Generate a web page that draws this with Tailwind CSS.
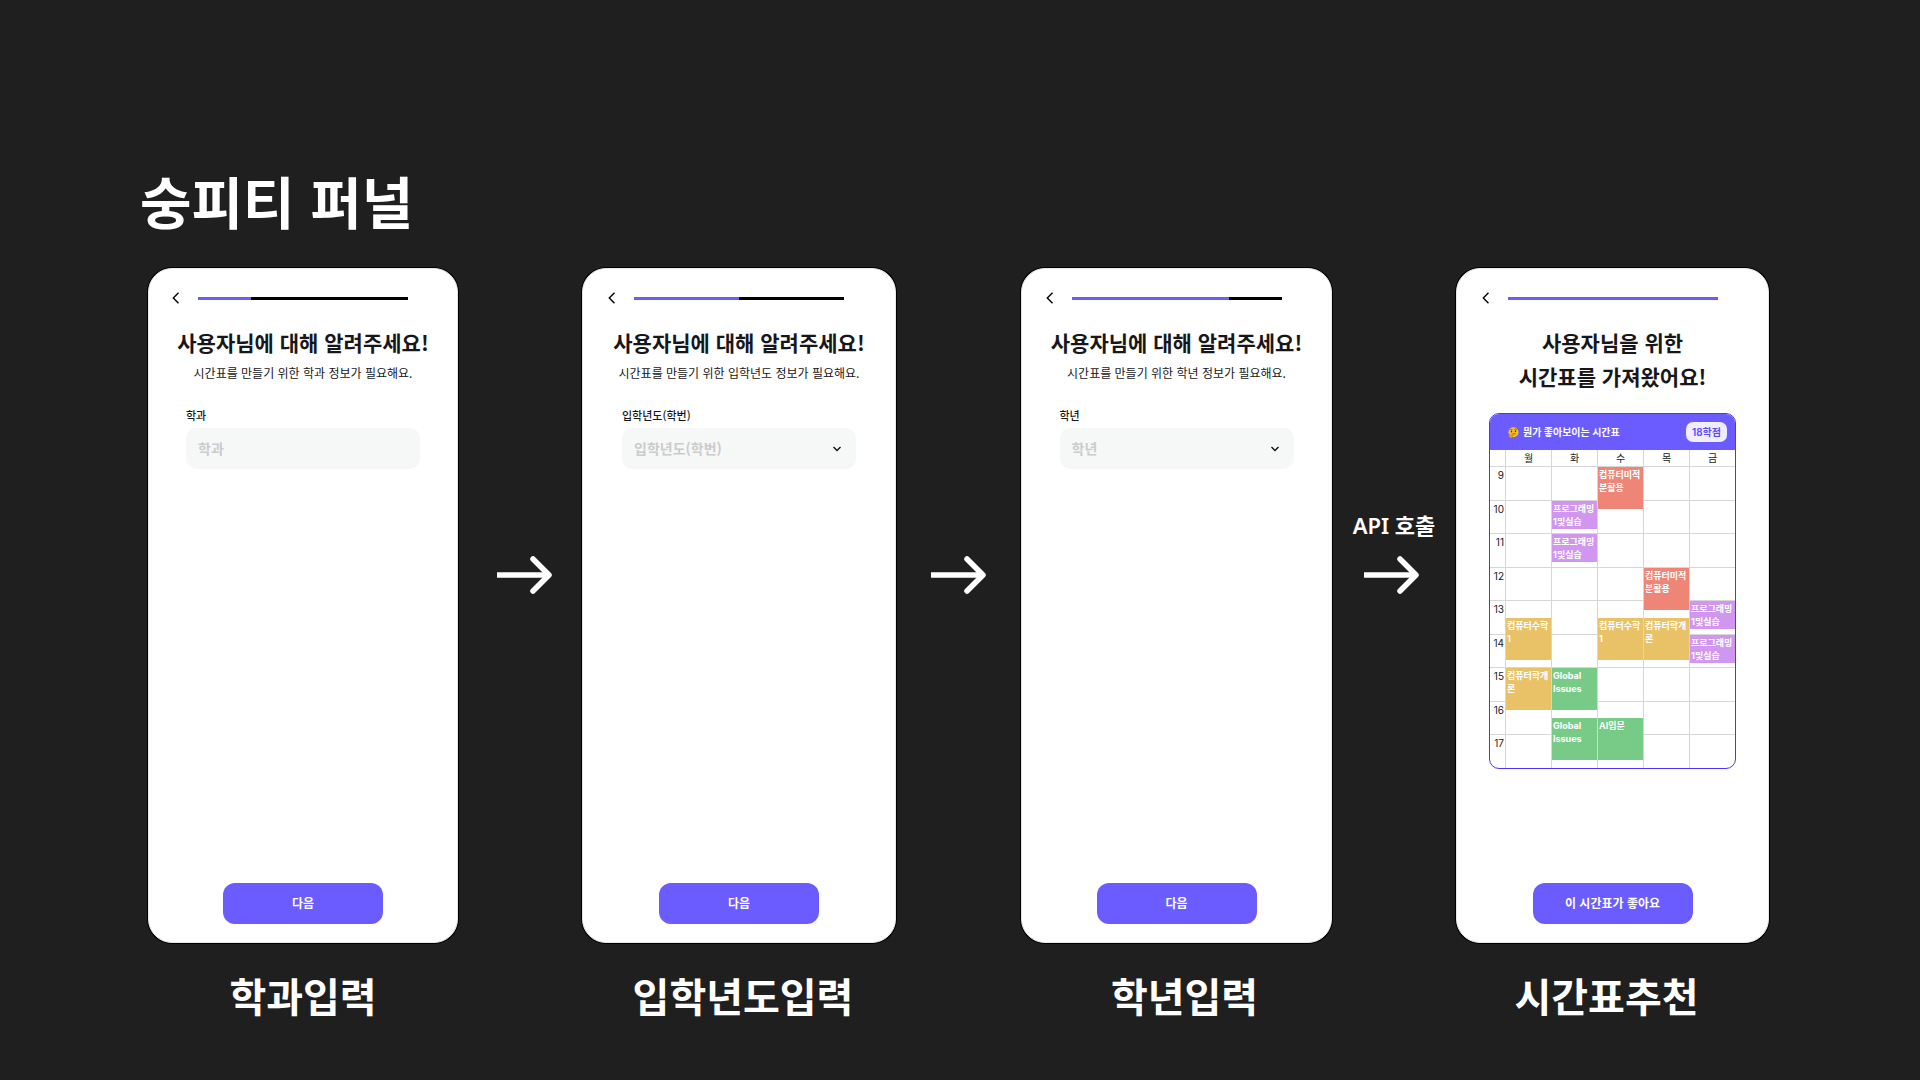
<!DOCTYPE html>
<html lang="ko">
<head>
  <meta charset="UTF-8">
  <meta name="viewport" content="width=device-width, initial-scale=1.0">
  <title>숭피티 퍼널</title>
  <script src="https://cdn.jsdelivr.net/npm/@tailwindcss/browser@4"></script>
</head>
<body class="min-h-screen bg-[#1f1f1f] font-['Noto_Sans_CJK_KR',sans-serif] text-[#17171b]">
  <main class="pt-40 pr-[151px] pl-[140px]">
    <h1 class="text-[56px] leading-[80px] font-bold text-white">숭피티 퍼널</h1>

    <div class="mt-7 ml-2 grid grid-cols-[310fr_124fr_314fr_125fr_311fr_124fr_313fr] items-start">

      <!-- Step 1: department -->
      <section>
        <div class="flex h-[675px] flex-col items-center rounded-3xl border border-[#e5e7eb] bg-white pt-[17px] pb-[18px] ring-1 ring-black">
          <div class="flex h-6 w-[264px] items-center">
            <button type="button" aria-label="뒤로" class="w-[27px]">
              <svg class="h-3 w-3" viewBox="0 0 12 12" fill="none" stroke="#000" stroke-width="1.4"><path d="M7.5 .8 2.300 6l5.200 5.200"/></svg>
            </button>
            <div class="h-[3px] w-[210px] bg-black"><div class="h-full bg-[#6b5cff]" style="width:25%"></div></div>
          </div>
          <h2 class="mt-[15px] text-[21px] leading-[34px] font-bold">사용자님에 대해 알려주세요!</h2>
          <p class="mt-1 text-xs leading-5">시간표를 만들기 위한 학과 정보가 필요해요.</p>
          <div class="mt-6 w-[234px]">
            <label for="department" class="block text-[11px] leading-4 font-medium">학과</label>
            <input id="department" type="text" placeholder="학과" class="mt-[5px] h-[41px] w-full rounded-[10px] bg-[#f6f8f8] px-3 pb-px text-sm font-bold placeholder:text-[#cbcbcb]">
          </div>
          <button type="button" class="mt-auto h-[41px] w-40 rounded-xl bg-[#6b5cff] pb-[2px] text-xs font-bold text-white">다음</button>
        </div>
        <h3 class="mt-[22px] text-center text-[40px] leading-[60px] font-bold text-white">학과입력</h3>
      </section>

      <div class="flex h-[327px] flex-col justify-end">
        <svg class="ml-[39px] h-10 w-14" viewBox="0 0 56 40" fill="none" stroke="#fff" stroke-width="5.500"><path d="M0 20h51"/><path d="M36 4l16 16-16 16" stroke-linecap="round" stroke-linejoin="round"/></svg>
      </div>

      <!-- Step 2: admission year -->
      <section>
        <div class="flex h-[675px] flex-col items-center rounded-3xl border border-[#e5e7eb] bg-white pt-[17px] pb-[18px] ring-1 ring-black">
          <div class="flex h-6 w-[264px] items-center">
            <button type="button" aria-label="뒤로" class="w-[27px]">
              <svg class="h-3 w-3" viewBox="0 0 12 12" fill="none" stroke="#000" stroke-width="1.4"><path d="M7.5 .8 2.300 6l5.200 5.200"/></svg>
            </button>
            <div class="h-[3px] w-[210px] bg-black"><div class="h-full bg-[#6b5cff]" style="width:50%"></div></div>
          </div>
          <h2 class="mt-[15px] text-[21px] leading-[34px] font-bold">사용자님에 대해 알려주세요!</h2>
          <p class="mt-1 text-xs leading-5">시간표를 만들기 위한 입학년도 정보가 필요해요.</p>
          <div class="mt-6 w-[234px]">
            <label for="admission" class="block text-[11px] leading-4 font-medium">입학년도(학번)</label>
            <div class="relative mt-[5px]">
              <select id="admission" class="h-[41px] w-full appearance-none rounded-[10px] bg-[#f6f8f8] px-3 pb-[2px] text-sm font-bold text-[#cbcbcb]">
                <option>입학년도(학번)</option>
              </select>
              <svg class="pointer-events-none absolute top-4 right-[14px] h-[10px] w-[10px]" viewBox="0 0 10 10" fill="none" stroke="#111" stroke-width="1.4"><path d="M1.5 3 5 6.500 8.500 3"/></svg>
            </div>
          </div>
          <button type="button" class="mt-auto h-[41px] w-40 rounded-xl bg-[#6b5cff] pb-[2px] text-xs font-bold text-white">다음</button>
        </div>
        <h3 class="mt-[22px] pl-2 text-center text-[40px] leading-[60px] font-bold text-white">입학년도입력</h3>
      </section>

      <div class="flex h-[327px] flex-col justify-end">
        <svg class="ml-[35px] h-10 w-14" viewBox="0 0 56 40" fill="none" stroke="#fff" stroke-width="5.500"><path d="M0 20h51"/><path d="M36 4l16 16-16 16" stroke-linecap="round" stroke-linejoin="round"/></svg>
      </div>

      <!-- Step 3: grade -->
      <section>
        <div class="flex h-[675px] flex-col items-center rounded-3xl border border-[#e5e7eb] bg-white pt-[17px] pb-[18px] ring-1 ring-black">
          <div class="flex h-6 w-[264px] items-center">
            <button type="button" aria-label="뒤로" class="w-[27px]">
              <svg class="h-3 w-3" viewBox="0 0 12 12" fill="none" stroke="#000" stroke-width="1.4"><path d="M7.5 .8 2.300 6l5.200 5.200"/></svg>
            </button>
            <div class="h-[3px] w-[210px] bg-black"><div class="h-full bg-[#6b5cff]" style="width:75%"></div></div>
          </div>
          <h2 class="mt-[15px] text-[21px] leading-[34px] font-bold">사용자님에 대해 알려주세요!</h2>
          <p class="mt-1 text-xs leading-5">시간표를 만들기 위한 학년 정보가 필요해요.</p>
          <div class="mt-6 w-[234px]">
            <label for="grade" class="block text-[11px] leading-4 font-medium">학년</label>
            <div class="relative mt-[5px]">
              <select id="grade" class="h-[41px] w-full appearance-none rounded-[10px] bg-[#f6f8f8] px-3 pb-[2px] text-sm font-bold text-[#cbcbcb]">
                <option>학년</option>
              </select>
              <svg class="pointer-events-none absolute top-4 right-[14px] h-[10px] w-[10px]" viewBox="0 0 10 10" fill="none" stroke="#111" stroke-width="1.4"><path d="M1.500 3 5 6.500 8.500 3"/></svg>
            </div>
          </div>
          <button type="button" class="mt-auto h-[41px] w-40 rounded-xl bg-[#6b5cff] pb-[2px] text-xs font-bold text-white">다음</button>
        </div>
        <h3 class="mt-[22px] pl-4 text-center text-[40px] leading-[60px] font-bold text-white">학년입력</h3>
      </section>

      <div class="flex h-[327px] flex-col justify-end gap-[14px]">
        <p class="text-center font-['Noto_Sans','Noto_Sans_CJK_KR',sans-serif] text-[22px] leading-8 font-semibold text-white">API 호출</p>
        <svg class="ml-8 h-10 w-14" viewBox="0 0 56 40" fill="none" stroke="#fff" stroke-width="5.500"><path d="M0 20h51"/><path d="M36 4l16 16-16 16" stroke-linecap="round" stroke-linejoin="round"/></svg>
      </div>

      <!-- Step 4: recommended timetable -->
      <section>
        <div class="flex h-[675px] flex-col items-center rounded-3xl border border-[#e5e7eb] bg-white pt-[17px] pb-[18px] ring-1 ring-black">
          <div class="flex h-6 w-[264px] items-center">
            <button type="button" aria-label="뒤로" class="w-[27px]">
              <svg class="h-3 w-3" viewBox="0 0 12 12" fill="none" stroke="#000" stroke-width="1.4"><path d="M7.5 .8 2.300 6l5.200 5.200"/></svg>
            </button>
            <div class="h-[3px] w-[210px] bg-black"><div class="h-full bg-[#6b5cff]" style="width:100%"></div></div>
          </div>
          <h2 class="mt-[15px] text-center text-[21px] leading-[34px] font-bold">사용자님을 위한<br>시간표를 가져왔어요!</h2>

          <div class="mt-5 w-[247px] overflow-hidden rounded-[10px] border border-[#4a35ff] font-['Inter','Noto_Sans_CJK_KR',sans-serif]">
            <div class="flex h-9 items-center bg-[#6b5cff] pr-2 pl-[18px] text-white">
              <svg class="h-[11px] w-[11px]" viewBox="0 0 22 22" fill="none">
                <circle cx="11" cy="10.500" r="10" fill="#fcc21b"/>
                <path d="M4 6c1-1.500 3-2 4.500-1M13 4.500c2-1.500 4-1 5 .5M8.500 14.500c2-1.500 4.500-1.500 6.500-.5" stroke="#6d4c1f" stroke-width="1.500" stroke-linecap="round"/>
                <ellipse cx="7" cy="9" rx="1.500" ry="2" fill="#4a3410"/>
                <ellipse cx="15" cy="8.500" rx="1.500" ry="2" fill="#4a3410"/>
                <path d="M3 14c1-1 2 0 2.500 1.500L11 15c1.500 0 1.500 1.500 0 2l-2 .5c.5 2-1 4-3.500 4S2 19.500 2 17.500z" fill="#f39c1f" stroke="#d97d0c" stroke-width=".8"/>
              </svg>
              <span class="ml-1 text-[10px] font-bold">뭔가 좋아보이는 시간표</span>
              <span class="ml-auto rounded-[7px] bg-[#efedff] px-[6px] text-[10px] leading-5 font-semibold text-[#5a48ff]">18학점</span>
            </div>
            <table class="w-full table-fixed border-separate border-spacing-0 text-[10px] leading-[13px] [&_td]:border-t [&_td]:border-l [&_td]:border-[#d6d6d6] [&_td]:p-0 [&_td]:relative [&_th]:p-0 [&_thead_th]:border-l [&_thead_th]:border-[#d6d6d6] [&_tbody_tr:nth-child(odd)]:h-[34px] [&_tbody_tr:nth-child(even)]:h-[33px] [&_tbody_th]:border-t [&_tbody_th]:border-[#d6d6d6] [&_tbody_th]:pt-[2px] [&_tbody_th]:pr-px [&_tbody_th]:text-right [&_tbody_th]:align-top [&_th]:font-normal [&_td>div]:absolute [&_td>div]:inset-x-0 [&_td>div]:z-10 [&_td>div]:pl-px [&_td>div]:pt-px [&_td>div]:text-[9px] [&_td>div]:font-bold [&_td>div]:text-white">
              <colgroup><col class="w-[15px]"><col><col><col><col><col></colgroup>
              <thead>
                <tr class="h-4"><td class="border-0!"></td><th>월</th><th>화</th><th>수</th><th>목</th><th>금</th></tr>
              </thead>
              <tbody>
                <tr><th>9</th><td></td><td></td><td><div class="top-0 h-[42px] bg-[#ef8576]">컴퓨터미적<br>분활용</div></td><td></td><td></td></tr>
                <tr><th>10</th><td></td><td><div class="top-0 h-7 bg-[#d196ef]">프로그래밍<br>1및실습</div></td><td></td><td></td><td></td></tr>
                <tr><th>11</th><td></td><td><div class="top-0 h-7 bg-[#d196ef]">프로그래밍<br>1및실습</div></td><td></td><td></td><td></td></tr>
                <tr><th>12</th><td></td><td></td><td></td><td><div class="top-0 h-[42px] bg-[#ef8576]">컴퓨터미적<br>분활용</div></td><td></td></tr>
                <tr><th>13</th><td><div class="top-1/2 h-[42px] bg-[#e9c268]">컴퓨터수학<br>1</div></td><td></td><td><div class="top-1/2 h-[42px] bg-[#e9c268]">컴퓨터수학<br>1</div></td><td><div class="top-1/2 h-[42px] bg-[#e9c268]">컴퓨터학개<br>론</div></td><td><div class="top-0 h-7 bg-[#d196ef]">프로그래밍<br>1및실습</div></td></tr>
                <tr><th>14</th><td></td><td></td><td></td><td></td><td><div class="top-0 h-7 bg-[#d196ef]">프로그래밍<br>1및실습</div></td></tr>
                <tr><th>15</th><td><div class="top-0 h-[42px] bg-[#e9c268]">컴퓨터학개<br>론</div></td><td><div class="top-0 h-[42px] bg-[#78ca87]">Global<br>Issues</div></td><td></td><td></td><td></td></tr>
                <tr><th>16</th><td></td><td><div class="top-1/2 h-[42px] bg-[#78ca87]">Global<br>Issues</div></td><td><div class="top-1/2 h-[42px] bg-[#78ca87]">AI입문</div></td><td></td><td></td></tr>
                <tr><th>17</th><td></td><td></td><td></td><td></td><td></td></tr>
              </tbody>
            </table>
          </div>

          <button type="button" class="mt-auto h-[41px] w-40 rounded-xl bg-[#6b5cff] pb-[2px] text-xs font-bold text-white">이 시간표가 좋아요</button>
        </div>
        <h3 class="mt-[22px] pr-3 text-center text-[40px] leading-[60px] font-bold text-white">시간표추천</h3>
      </section>
    </div>
  </main>
</body>
</html>
